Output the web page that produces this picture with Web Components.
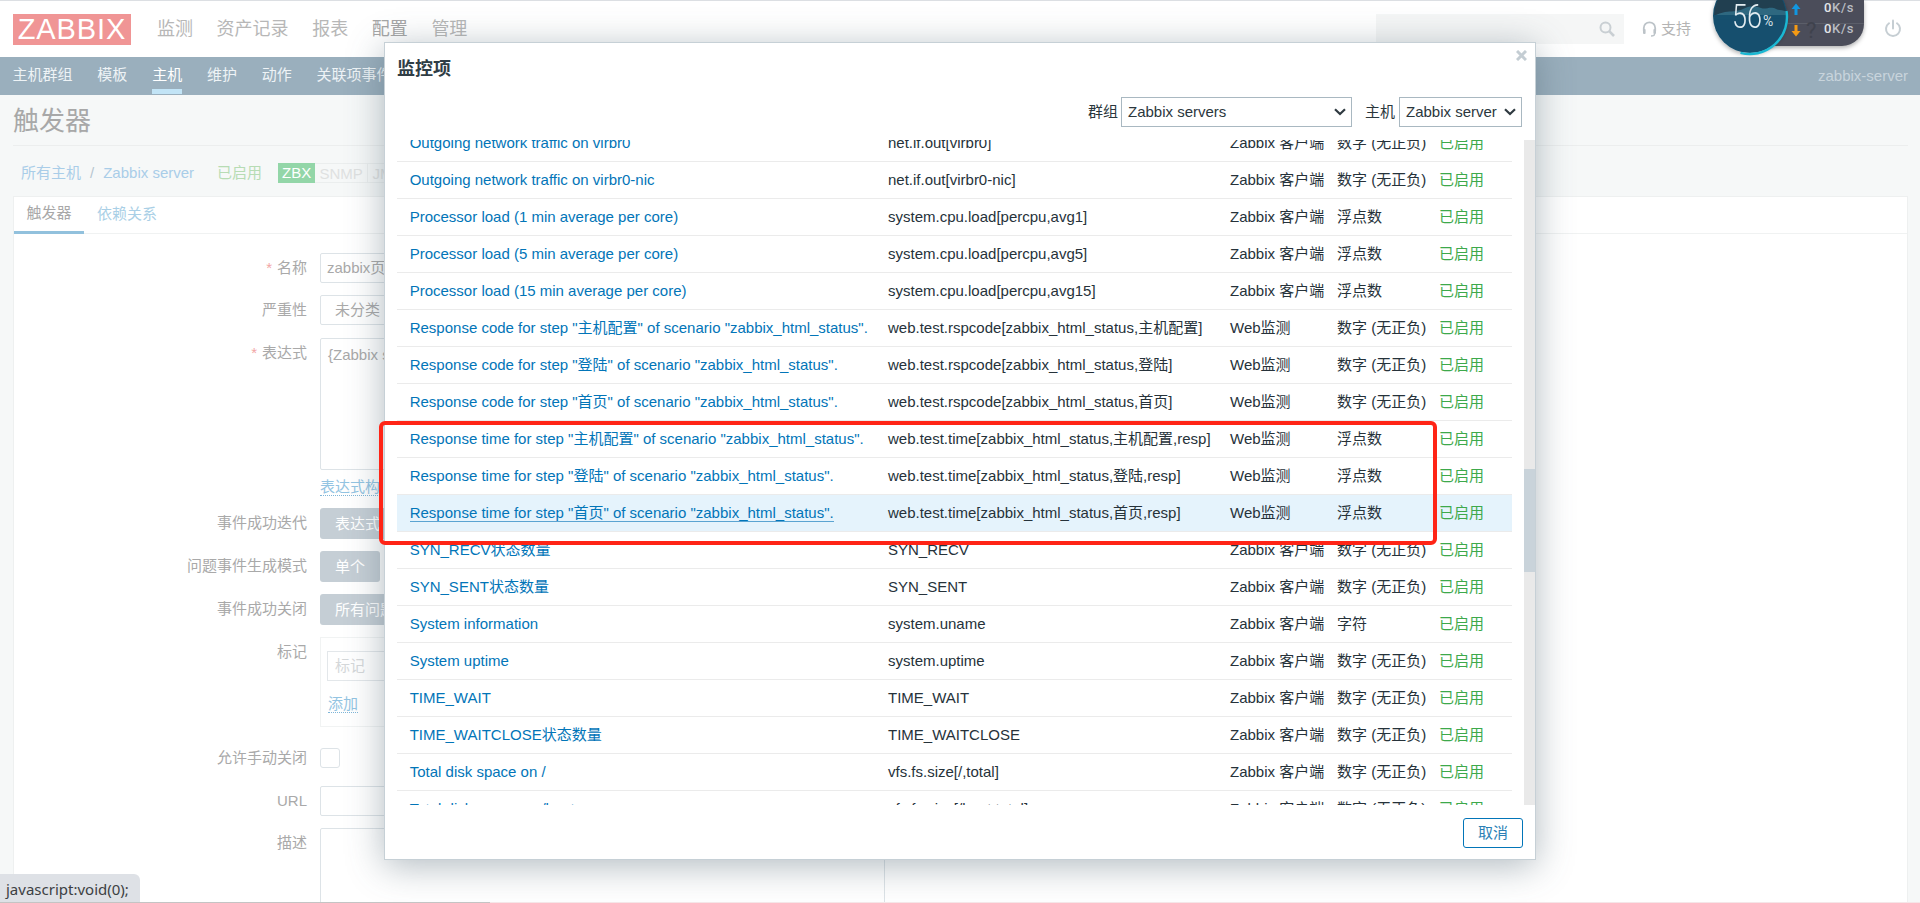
<!DOCTYPE html>
<html lang="zh-CN">
<head>
<meta charset="utf-8">
<title>Zabbix 触发器</title>
<style>
html,body{margin:0;padding:0;height:903px;overflow:hidden;background:#f6f8f8;}
body{font:15px/1.2 "Liberation Sans","Noto Sans CJK SC",sans-serif;color:#1f2c33;}
</style>
</head>
<body>
<zbx-app>
  <zbx-topbar></zbx-topbar>
  <zbx-subnav></zbx-subnav>
  <zbx-page>
    <zbx-card>
      <zbx-row label="名称" required><zbx-field>zabbix页面</zbx-field></zbx-row>
      <zbx-row label="严重性"><zbx-field style="width:75px;padding-left:14px">未分类</zbx-field></zbx-row>
      <zbx-row label="表达式" required gap="13"><zbx-field style="height:132px;align-items:flex-start;padding-left:7px;padding-top:7px">{Zabbix s</zbx-field></zbx-row>
      <zbx-row gap="8"><zbx-link>表达式构</zbx-link></zbx-row>
      <zbx-row label="事件成功迭代" gap="12"><zbx-btn>表达式</zbx-btn></zbx-row>
      <zbx-row label="问题事件生成模式"><zbx-btn style="width:60px">单个</zbx-btn></zbx-row>
      <zbx-row label="事件成功关闭"><zbx-btn style="width:100px">所有问题</zbx-btn></zbx-row>
      <zbx-row label="标记"><zbx-tags></zbx-tags></zbx-row>
      <zbx-row label="允许手动关闭" gap="21" tight><zbx-check></zbx-check></zbx-row>
      <zbx-row label="URL" gap="18"><zbx-field></zbx-field></zbx-row>
      <zbx-row label="描述"><zbx-field style="height:120px"></zbx-field></zbx-row>
    </zbx-card>
  </zbx-page>

  <zbx-modal>
    <span slot="title">监控项</span>
    <zbx-filter slot="filter"></zbx-filter>
    <zbx-item-row name="Outgoing network traffic on virbr0" key="net.if.out[virbr0]" source="Zabbix 客户端" kind="数字 (无正负)"></zbx-item-row>
    <zbx-item-row name="Outgoing network traffic on virbr0-nic" key="net.if.out[virbr0-nic]" source="Zabbix 客户端" kind="数字 (无正负)"></zbx-item-row>
    <zbx-item-row name="Processor load (1 min average per core)" key="system.cpu.load[percpu,avg1]" source="Zabbix 客户端" kind="浮点数"></zbx-item-row>
    <zbx-item-row name="Processor load (5 min average per core)" key="system.cpu.load[percpu,avg5]" source="Zabbix 客户端" kind="浮点数"></zbx-item-row>
    <zbx-item-row name="Processor load (15 min average per core)" key="system.cpu.load[percpu,avg15]" source="Zabbix 客户端" kind="浮点数"></zbx-item-row>
    <zbx-item-row name='Response code for step "主机配置" of scenario "zabbix_html_status".' key="web.test.rspcode[zabbix_html_status,主机配置]" source="Web监测" kind="数字 (无正负)"></zbx-item-row>
    <zbx-item-row name='Response code for step "登陆" of scenario "zabbix_html_status".' key="web.test.rspcode[zabbix_html_status,登陆]" source="Web监测" kind="数字 (无正负)"></zbx-item-row>
    <zbx-item-row name='Response code for step "首页" of scenario "zabbix_html_status".' key="web.test.rspcode[zabbix_html_status,首页]" source="Web监测" kind="数字 (无正负)"></zbx-item-row>
    <zbx-item-row name='Response time for step "主机配置" of scenario "zabbix_html_status".' key="web.test.time[zabbix_html_status,主机配置,resp]" source="Web监测" kind="浮点数"></zbx-item-row>
    <zbx-item-row name='Response time for step "登陆" of scenario "zabbix_html_status".' key="web.test.time[zabbix_html_status,登陆,resp]" source="Web监测" kind="浮点数"></zbx-item-row>
    <zbx-item-row hover name='Response time for step "首页" of scenario "zabbix_html_status".' key="web.test.time[zabbix_html_status,首页,resp]" source="Web监测" kind="浮点数"></zbx-item-row>
    <zbx-item-row name="SYN_RECV状态数量" key="SYN_RECV" source="Zabbix 客户端" kind="数字 (无正负)"></zbx-item-row>
    <zbx-item-row name="SYN_SENT状态数量" key="SYN_SENT" source="Zabbix 客户端" kind="数字 (无正负)"></zbx-item-row>
    <zbx-item-row name="System information" key="system.uname" source="Zabbix 客户端" kind="字符"></zbx-item-row>
    <zbx-item-row name="System uptime" key="system.uptime" source="Zabbix 客户端" kind="数字 (无正负)"></zbx-item-row>
    <zbx-item-row name="TIME_WAIT" key="TIME_WAIT" source="Zabbix 客户端" kind="数字 (无正负)"></zbx-item-row>
    <zbx-item-row name="TIME_WAITCLOSE状态数量" key="TIME_WAITCLOSE" source="Zabbix 客户端" kind="数字 (无正负)"></zbx-item-row>
    <zbx-item-row name="Total disk space on /" key="vfs.fs.size[/,total]" source="Zabbix 客户端" kind="数字 (无正负)"></zbx-item-row>
    <zbx-item-row name="Total disk space on /boot" key="vfs.fs.size[/boot,total]" source="Zabbix 客户端" kind="数字 (无正负)"></zbx-item-row>
    <zbx-cancel slot="footer">取消</zbx-cancel>
  </zbx-modal>

  <zbx-annotation></zbx-annotation>
  <zbx-status>javascript:void(0);</zbx-status>
</zbx-app>

<script>
function define(name, css, html, setup){
  customElements.define(name, class extends HTMLElement{
    constructor(){
      super();
      this.attachShadow({mode:'open'});
    }
    connectedCallback(){
      const body = typeof html === 'function' ? html(this) : html;
      this.shadowRoot.innerHTML = '<style>'+css+'</style>'+body;
      if(setup) setup(this);
    }
  });
}
const esc = s => String(s==null?'':s).replace(/&/g,'&amp;').replace(/"/g,'&quot;').replace(/</g,'&lt;');

define('zbx-app',
 `:host{display:flex;flex-direction:column;position:relative;width:1920px;height:903px;overflow:hidden;background:#f6f8f8;}
  .bottom{position:absolute;left:0;right:0;bottom:0;height:1px;background:linear-gradient(90deg,#c4c4c4 0,#c4c4c4 490px,#f5e6e8 490px,#f5e6e8 100%);}`,
 `<slot></slot><div class="bottom"></div>`);

define('zbx-topbar',
 `:host{display:flex;align-items:center;height:56px;margin-top:1px;box-shadow:0 -1px 0 #dcdfe3;background:#fff;position:relative;flex:none;box-sizing:border-box;padding-left:13px;}
  .logo{width:118px;height:31px;background:#f09595;color:#fff;font:29px/31px "Liberation Sans",sans-serif;letter-spacing:.9px;text-align:center;flex:none;}
  nav{display:flex;gap:23.6px;margin-left:26px;font-size:18px;color:#b7b7b7;margin-top:1px;}
  nav .on{color:#a6a6a6;}
  .search{position:absolute;left:1376px;top:13px;width:248px;height:30px;background:#f5f6f6;display:flex;align-items:center;justify-content:flex-end;padding-right:9px;box-sizing:border-box;}
  .support{position:absolute;left:1642px;top:13px;height:30px;display:flex;align-items:center;gap:4px;color:#b4b4b4;font-size:15px;}
  .power{position:absolute;left:1884px;top:18px;}
  svg{display:block}`,
 `<div class="logo">ZABBIX</div>
  <nav><span>监测</span><span>资产记录</span><span>报表</span><span class="on">配置</span><span>管理</span></nav>
  <div class="search"><svg width="16" height="16" viewBox="0 0 16 16" fill="none" stroke="#c9cfd3" stroke-width="2"><circle cx="6.5" cy="6.5" r="5"/><path d="M10.2 10.2 15 15" stroke-width="2.6"/></svg></div>
  <div class="support"><svg width="15" height="16" viewBox="0 0 15 16" fill="none" stroke="#bcc3c8" stroke-width="1.8"><path d="M1.8 10V7a5.7 5.7 0 0 1 11.4 0v3"/><rect x="1" y="8" width="2.6" height="5" rx="1" fill="#bcc3c8" stroke="none"/><rect x="11.4" y="8" width="2.6" height="5" rx="1" fill="#bcc3c8" stroke="none"/><path d="M12.6 13c0 1.4-1.6 2-3.6 2" stroke-width="1.3"/></svg><span>支持</span></div>
  <zbx-netmeter></zbx-netmeter>
  <div class="power"><svg width="18" height="19" viewBox="0 0 18 19" fill="none" stroke="#c6ced3" stroke-width="2" stroke-linecap="round"><path d="M9 1.5v8"/><path d="M5 4.2a7 7 0 1 0 8 0"/></svg></div>`);

define('zbx-netmeter',
 `:host{position:absolute;left:1700px;top:-1px;width:180px;height:60px;display:block;font-family:Roboto,"Liberation Sans",sans-serif;}
  svg{display:block;overflow:visible}
  span{position:absolute;white-space:nowrap;}
  .big{left:32px;top:4px;font-size:33px;line-height:25px;color:#e4edf1;font-weight:300;transform:scaleX(.82);transform-origin:0 0;}
  .pct{left:63px;top:15px;font-size:14px;line-height:13px;color:#d7e1e6;}
  .sp{left:124px;font-size:13px;line-height:13px;color:#b9bcc2;font-weight:500;letter-spacing:.7px;}
  .sp b{color:#e3e5e8;font-weight:500;}
  .q{left:106px;top:21px;font-size:22px;line-height:20px;color:#3f424d;}`,
 `<svg width="180" height="60" viewBox="0 0 180 60">
   <defs><clipPath id="c"><circle cx="50" cy="16" r="36"/></clipPath>
   <filter id="s" x="-20%" y="-20%" width="140%" height="150%"><feDropShadow dx="0" dy="2" stdDeviation="2" flood-color="#000" flood-opacity=".3"/></filter></defs>
   <path d="M60 0H164V24a22 22 0 0 1-22 22H60Z" fill="#4b4e5a" filter="url(#s)"/>
   <path d="M88 23.500H164" stroke="#5b5e69" stroke-width="1"/>
   <circle cx="50" cy="16" r="37" fill="#15506e" filter="url(#s)"/>
   <g clip-path="url(#c)">
     <rect x="10" y="-24" width="80" height="42" fill="#213f50"/>
     <path d="M10 18h80v-4c-5-5-10-3-14-5-6-3-10 1-15-1-7-3-13-2-18 1-6 3-12 2-18 3-5 1-10 3-15 6Z" fill="#2e6880"/>
     <path d="M10 21c15-3 30-1 40-1s25-3 40 0v-5H10Z" fill="#15506e"/>
   </g>
   <path d="M40.500 51.800A37 37 0 0 0 86.500 10" fill="none" stroke="#1bb8d3" stroke-width="2.400" transform="translate(0 1)"/>
   <path d="M96 3.500 91.500 9h3v6h3V9h3Z" fill="#1296e0"/>
   <path d="M96 36.500 91.500 31h3v-6h3v6h3Z" fill="#f59a14"/>
  </svg>
  <span class="big">56</span><span class="pct">%</span>
  <span class="q">?</span>
  <span class="sp" style="top:1px"><b>0</b>K/s</span><span class="sp" style="top:22px"><b>0</b>K/s</span>`);

define('zbx-subnav',
 `:host{display:flex;align-items:center;height:38px;background:#9aafbd;color:#eef3f6;font-size:15px;padding:0 12px 0 12.5px;box-sizing:border-box;flex:none;}
  nav{display:flex;gap:24.8px;height:100%;}
  span{display:flex;align-items:center;padding-bottom:2px;position:relative;box-sizing:border-box;}
  .on{color:#fff;}
  .on::after{content:"";position:absolute;left:0;right:0;top:32px;height:5px;background:#c2e4f6;}
  .srv{margin-left:auto;color:#c8d4dc;}`,
 `<nav><span>主机群组</span><span>模板</span><span class="on">主机</span><span>维护</span><span>动作</span><span>关联项事件</span></nav><div class="srv">zabbix-server</div>`);

define('zbx-page',
 `:host{display:flex;flex-direction:column;flex:1;min-height:0;padding:0 12px 0 13px;box-sizing:border-box;}
  h1{margin:0;height:51px;flex:none;box-sizing:border-box;border-bottom:1px solid #eceeee;font:400 26px/53px "Liberation Sans","Noto Sans CJK SC",sans-serif;color:#a8a8a8;}
  .crumbs{height:50px;flex:none;display:flex;align-items:center;padding-left:8px;color:#a9cde8;font-size:15px;padding-top:4px;box-sizing:border-box;}
  .sep{margin:0 9px;color:#b6c6d0}
  .on{color:#b7dcb4;margin-left:23px;margin-right:16px;}
  .tag{height:20px;line-height:20px;padding:0 0;border:1px solid #ebeeee;border-left:0;box-sizing:border-box;color:#dfe1e1;font-size:15px;text-align:center;}
  .tag.z{background:#93d6a8;color:#fff;border:0;width:37px;}
  .tag.s{width:53px}.tag.j{width:40px}`,
 `<h1>触发器</h1>
  <div class="crumbs"><span>所有主机</span><span class="sep">/</span><span>Zabbix server</span><span class="on">已启用</span><span class="tag z">ZBX</span><span class="tag s">SNMP</span><span class="tag j">JMX</span></div>
  <slot></slot>`);

define('zbx-card',
 `:host{display:block;flex:1;min-height:0;background:#fff;border:1px solid #eef0f0;border-bottom:0;}
  .tabs{display:flex;height:37px;border-bottom:1px solid #f0f2f2;box-sizing:border-box;font-size:15px;}
  .tab{width:70px;display:flex;align-items:center;justify-content:center;color:#a8a8a8;box-sizing:border-box;border-bottom:3px solid #92c1dd;margin-bottom:-1px;padding-bottom:2px;}
  .tab2{color:#a9cfe6;margin-left:13px;display:flex;align-items:center;padding-bottom:3px;}
  .form{padding-top:19px;}`,
 `<div class="tabs"><div class="tab">触发器</div><div class="tab2">依赖关系</div></div><div class="form"><slot></slot></div>`);

define('zbx-row',
 `:host{display:grid;grid-template-columns:293px 565px;column-gap:13px;align-items:start;font-size:15px;}
  .l{line-height:30px;text-align:right;color:#a9a9a9;}
  :host([tight]) .l{line-height:20px;}
  .r{color:#f2a6a6;margin-right:5px;}`,
 el=>{
   el.style.marginTop=(el.getAttribute('gap')|| (el.previousElementSibling?12:0))+'px';
   const lab=el.getAttribute('label')||'';
   return `<div class="l">${el.hasAttribute('required')?'<span class="r">*</span>':''}${esc(lab)}</div><div><slot></slot></div>`;
 });

define('zbx-field',
 `:host{display:flex;align-items:center;height:30px;border:1px solid #dde3e7;border-radius:2px;box-sizing:border-box;padding-left:6px;color:#a9a9a9;font-size:15px;background:#fff;overflow:hidden;white-space:nowrap;}`,
 `<slot></slot>`);

define('zbx-btn',
 `:host{display:flex;align-items:center;height:31px;width:90px;background:#c5ced5;border-radius:3px;color:#fff;padding-left:15px;box-sizing:border-box;white-space:nowrap;font-size:15px;overflow:hidden;}`,
 `<slot></slot>`);

define('zbx-link',
 `:host{display:inline-block;color:#93c4e2;font-size:15px;line-height:17px;border-bottom:1px dotted #7fb6d8;}`,
 `<slot></slot>`);

define('zbx-tags',
 `:host{display:block;height:90px;border:1px solid #f1f3f3;box-sizing:border-box;padding:13px 0 0 6px;}
  .i{width:300px;height:30px;border:1px solid #e3e7ea;color:#d5d8da;line-height:28px;padding-left:7px;box-sizing:border-box;font-size:15px;}
  .a{display:inline-block;margin-top:14px;margin-left:1px;color:#93c4e2;line-height:17px;border-bottom:1px dotted #7fb6d8;font-size:15px;}`,
 `<div class="i">标记</div><span class="a">添加</span>`);

define('zbx-check',
 `:host{display:block;width:20px;height:20px;border:1px solid #dde3e7;border-radius:3px;box-sizing:border-box;margin-top:0;}`, ``);

define('zbx-modal',
 `:host{position:absolute;left:384px;top:42px;width:1152px;height:818px;box-sizing:border-box;border:1px solid #c6d0d6;background:#fff;display:flex;flex-direction:column;box-shadow:0 6px 34px rgba(70,90,105,.42);}
  header{height:54px;flex:none;position:relative;padding-left:12px;font:700 18px/52px "Liberation Sans","Noto Sans CJK SC",sans-serif;color:#2f3d45;}
  .x{position:absolute;right:8px;top:7px;}
  .filter{height:43px;flex:none;}
  .body{flex:1;min-height:0;display:flex;}
  .list{width:1115px;margin-left:12px;overflow:hidden;}
  .inner{margin-top:-15px;}
  .track{width:11px;margin-left:12px;background:#e9e9e9;flex:none;overflow:hidden;}
  .thumb{height:103px;margin-top:329px;background:#c9d3da;}
  footer{height:54px;flex:none;display:flex;justify-content:flex-end;align-items:flex-start;padding:13px 12px 0 0;box-sizing:border-box;}`,
 `<header><slot name="title"></slot><svg class="x" width="11" height="11" viewBox="0 0 11 11" stroke="#c4cdd3" stroke-width="3"><path d="M1 1l9 9M10 1l-9 9"/></svg></header>
  <div class="filter"><slot name="filter"></slot></div>
  <div class="body"><div class="list"><div class="inner"><slot></slot></div></div><div class="track"><div class="thumb"></div></div></div>
  <footer><slot name="footer"></slot></footer>`);

const chev = `<svg width="12" height="8" viewBox="0 0 12 8" fill="none" stroke="#2f3a40" stroke-width="2.200"><path d="M1 1.200 6 6l5-4.800"/></svg>`;
define('zbx-filter',
 `:host{display:flex;justify-content:flex-end;align-items:center;height:30px;padding-right:13px;font-size:15px;color:#2b373d;}
  .s{height:30px;border:1px solid #a9b8c1;box-sizing:border-box;display:flex;align-items:center;justify-content:space-between;padding:0 5px 0 6px;margin-left:3px;background:#fff;}
  .g{width:231px;margin-right:13px}.h{width:123px;margin-left:4px}`,
 `<span>群组</span><div class="s g"><span>Zabbix servers</span>${chev}</div><span>主机</span><div class="s h"><span>Zabbix server</span>${chev}</div>`);

define('zbx-item-row',
 `:host{display:grid;grid-template-columns:479px 342px 107px 103px 84px;height:37px;box-sizing:border-box;border-bottom:1px solid #ebebeb;align-items:center;font-size:15px;color:#26323a;white-space:nowrap;}
  :host([hover]){background:#e5f3fc;}
  div{padding-left:12px;}
  .n{padding-left:12.7px;}
  a{color:#0275b8;text-decoration:none;}
  :host([hover]) a{border-bottom:1px solid #5ba4d2;}
  .ok{color:#3da94b;padding-left:11px;}`,
 el=>{
   const g=k=>esc(el.getAttribute(k));
   return `<div class="n"><a href="#">${g('name')}</a></div><div>${g('key')}</div><div>${g('source')}</div><div>${g('kind')}</div><div class="ok">已启用</div>`;
 });

define('zbx-cancel',
 `:host{display:flex;align-items:center;justify-content:center;width:60px;height:30px;border:1px solid #0275b8;border-radius:3px;box-sizing:border-box;color:#2c7fb5;font-size:15px;background:#fff;}`,
 `<slot></slot>`);

define('zbx-annotation',
 `:host{position:absolute;left:379px;top:421px;width:1058px;height:124px;box-sizing:border-box;border:4px solid #ff2416;border-radius:6px;pointer-events:none;display:block;}`, ``);

define('zbx-status',
 `:host{position:absolute;left:0;bottom:0;height:29px;width:140px;background:#dee1e6;border-top-right-radius:6px;color:#3c4043;font:15px/30px "Noto Sans",sans-serif;padding-left:6px;box-sizing:border-box;white-space:nowrap;overflow:hidden;}`,
 `<slot></slot>`);
</script>
</body>
</html>
